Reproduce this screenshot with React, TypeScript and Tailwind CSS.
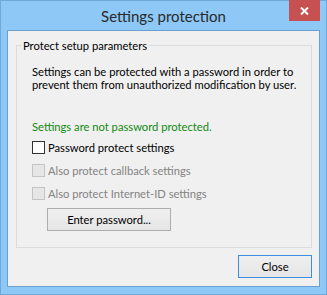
import React from "react"

const font = { fontFamily: 'Lato, "Noto Sans", "Liberation Sans", sans-serif' }

function Check({ label, disabled }: { label: string; disabled?: boolean }) {
  return (
    <div className="flex items-center h-[13px]">
      <div
        className={
          disabled
            ? "w-[13px] h-[13px] border border-[#c4c4c4] bg-[#e6e6e6]"
            : "w-[13px] h-[13px] border border-[#333333] bg-white"
        }
      />
      <span className={disabled ? "ml-[3px] leading-[13px] text-[#838383]" : "ml-[3px] leading-[13px] text-black"}>
        {label}
      </span>
    </div>
  )
}

export default function App() {
  return (
    <div
      className="w-[327px] h-[295px] bg-[#8dc8f6] border border-[#6fa9d9] flex flex-col text-[11.2px] whitespace-nowrap select-none"
      style={font}
    >
      {/* title bar */}
      <div className="relative h-[29px] flex items-center justify-center">
        <span className="text-[15px] text-[#2a2a2a] mt-[1px]">Settings protection</span>
        <div className="absolute top-[-1px] right-[6px] w-[31px] h-[21px] bg-[#c75050] flex items-center justify-center">
          <svg width="9" height="8" viewBox="0 0 9 8">
            <path d="M1 0.5 L8 7.5 M8 0.5 L1 7.5" stroke="white" strokeWidth="2" />
          </svg>
        </div>
      </div>

      {/* client area */}
      <div className="mx-[6px] h-[257px] border border-[#6b9fcf] bg-[#f0f0f0] flex flex-col">
        <div className="mt-[14px] ml-[8px] w-[296px] h-[203px] border border-[#dcdcdc] relative">
          <span className="absolute top-[-8px] left-[4px] px-[2px] bg-[#f0f0f0] leading-[15px] text-black">
            Protect setup parameters
          </span>
          <div className="pl-[15px] pt-[19px] flex flex-col">
            <p className="leading-[13px] text-black">
              Settings can be protected with a password in order to
              <br />
              prevent them from unauthorized modification by user.
            </p>
            <p className="mt-[29px] leading-[13px] text-[#118a11]">Settings are not password protected.</p>
            <div className="mt-[8px] flex flex-col gap-[10px]">
              <Check label="Password protect settings" />
              <Check label="Also protect callback settings" disabled />
              <Check label="Also protect Internet-ID settings" disabled />
            </div>
            <button className="mt-[8px] ml-[15px] w-[124px] h-[23px] border border-[#adadad] bg-gradient-to-b from-[#f0f0f0] to-[#e5e5e5] text-black leading-[13px]">
              Enter password...
            </button>
          </div>
        </div>
        <div className="mt-[7px] mr-[7px] flex justify-end">
          <button className="w-[74px] h-[23px] border border-[#3c8ee0] bg-gradient-to-b from-[#f0f0f0] to-[#e5e5e5] text-black leading-[13px]">
            Close
          </button>
        </div>
      </div>
    </div>
  )
}
